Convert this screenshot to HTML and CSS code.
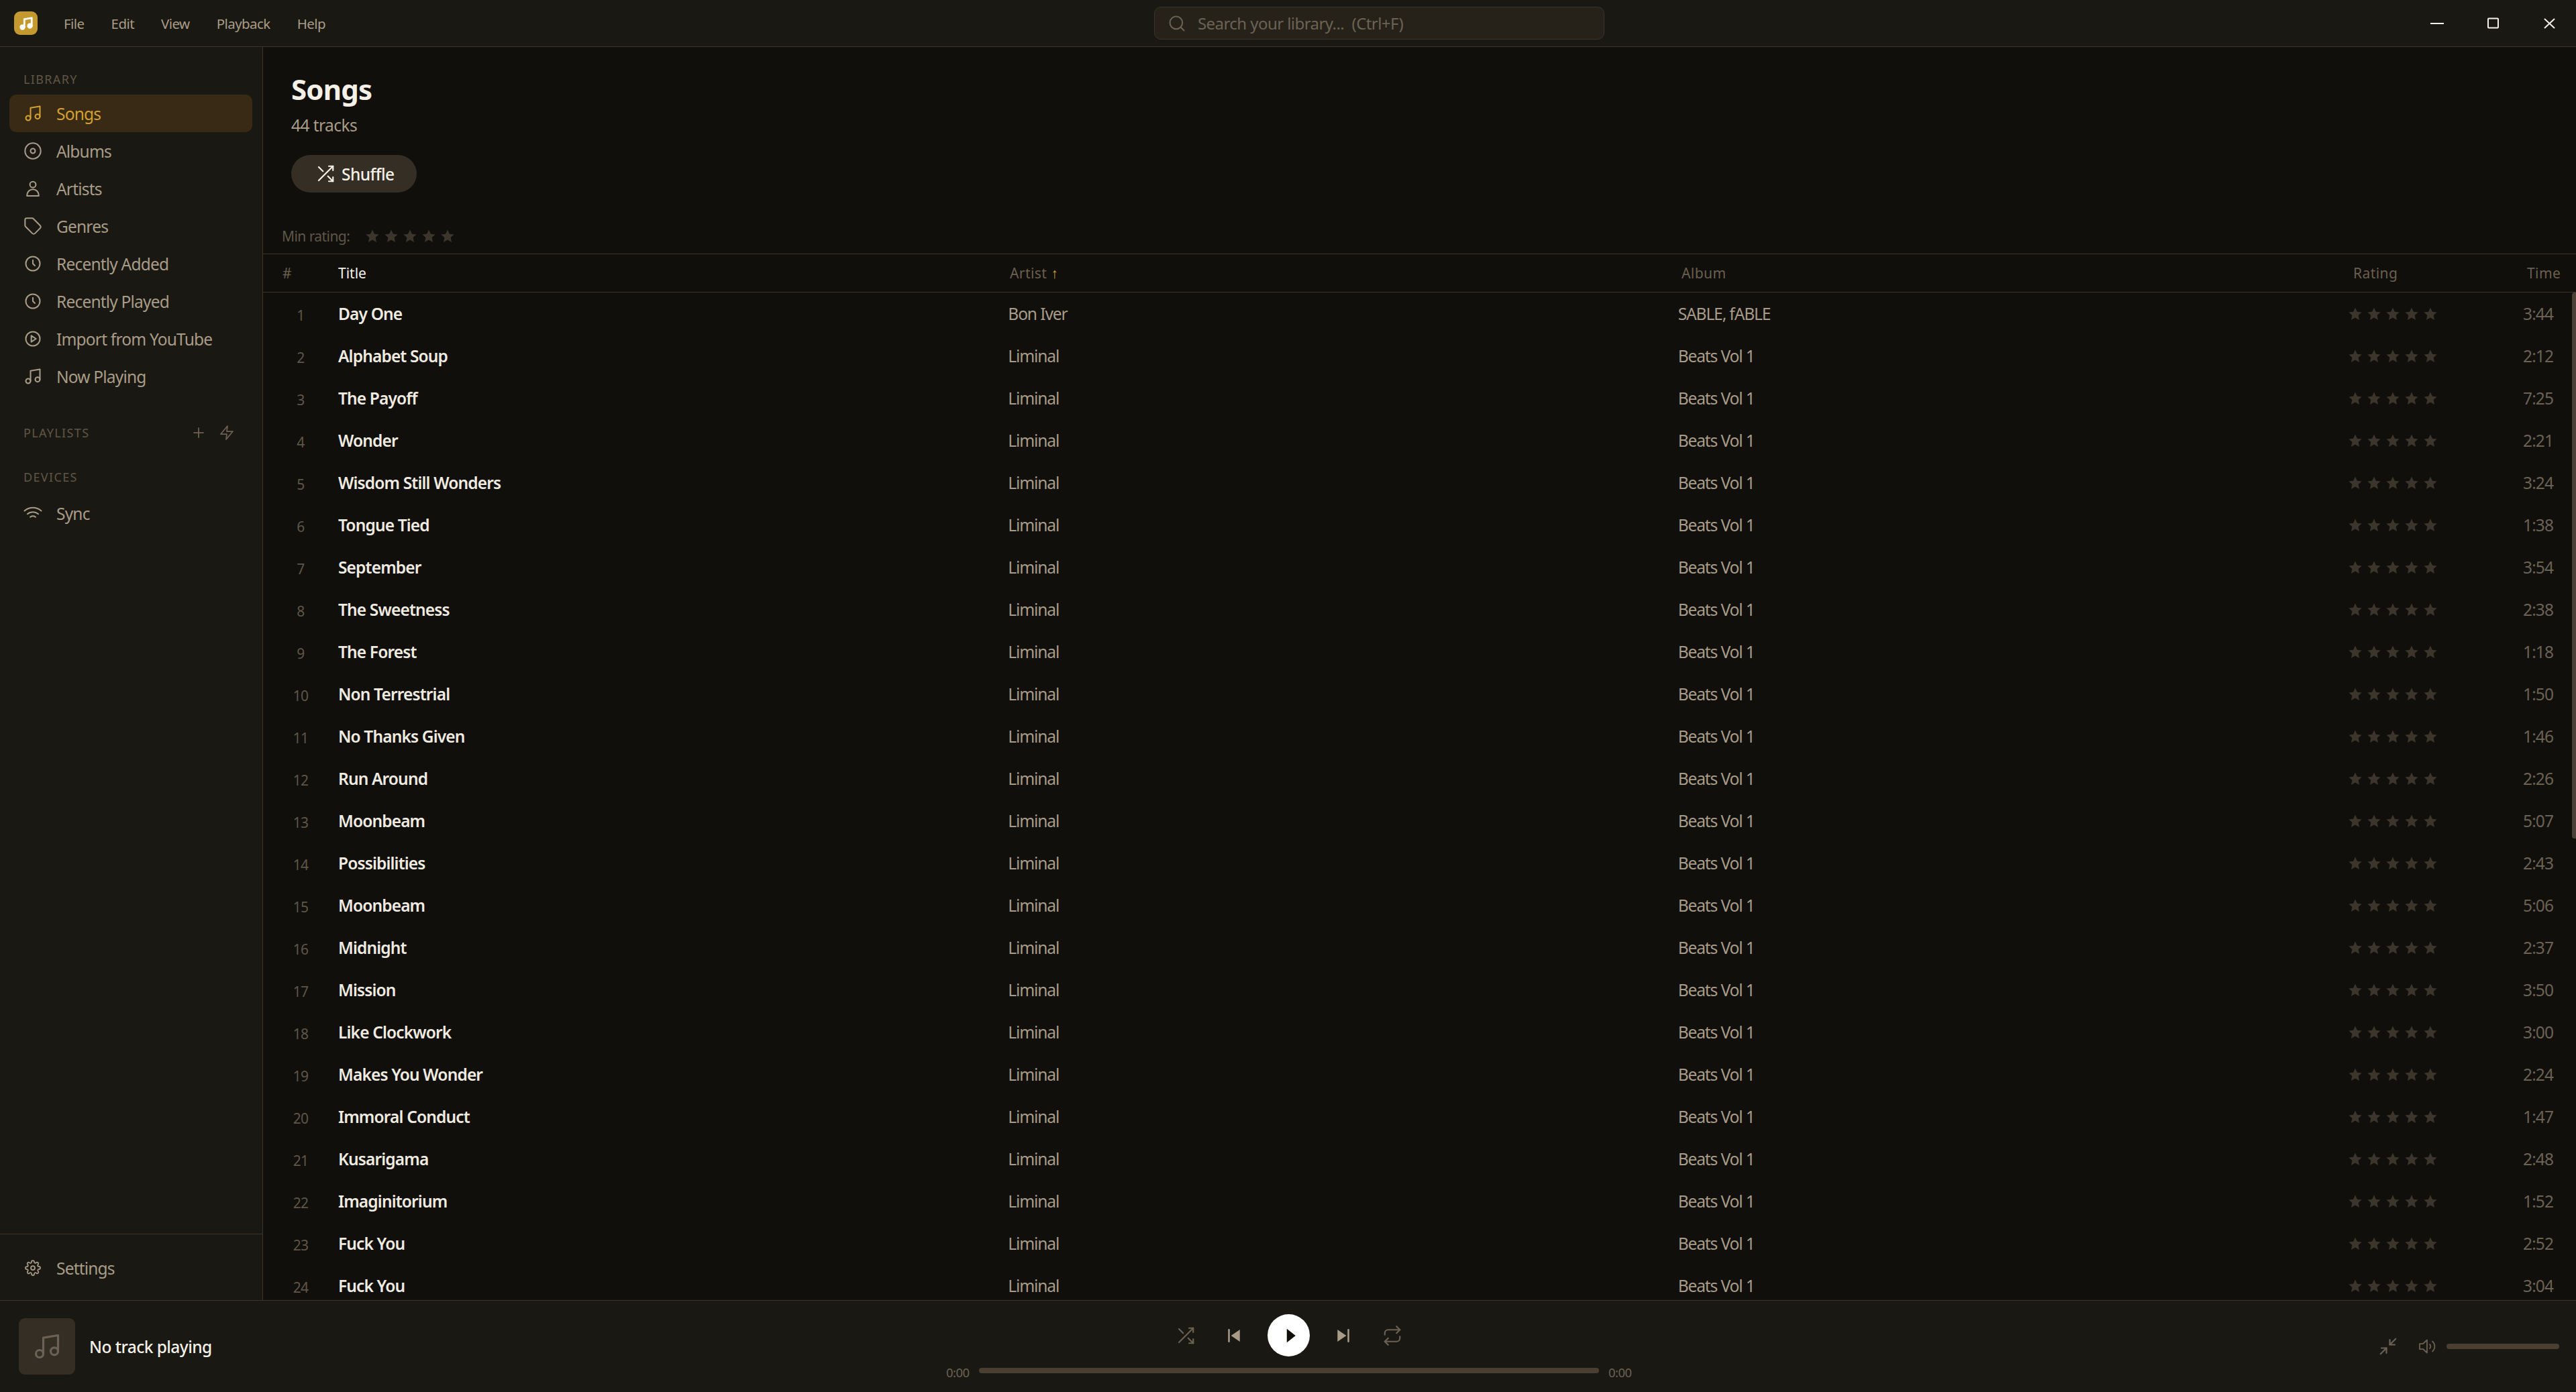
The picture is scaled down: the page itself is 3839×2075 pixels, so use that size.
FILE: index.html
```html
<!DOCTYPE html>
<html lang="en">
<head>
    <meta charset="UTF-8">
    <meta name="viewport" content="width=device-width, initial-scale=1.0">
    <title>Music Library</title>
    <link rel="stylesheet" href="styles.css">
</head>
<body>
    <svg class="sprite" aria-hidden="true">
        <symbol id="i-music" viewBox="0 0 24 24"><path d="M9 18V5l12-2v13"/><circle cx="6" cy="18" r="3"/><circle cx="18" cy="16" r="3"/></symbol>
        <symbol id="i-disc" viewBox="0 0 24 24"><circle cx="12" cy="12" r="10"/><circle cx="12" cy="12" r="3"/></symbol>
        <symbol id="i-user" viewBox="0 0 24 24"><circle cx="12" cy="7" r="3.800"/><path d="M4.500 21.500v-1a7.500 7.500 0 0 1 15 0v1z"/></symbol>
        <symbol id="i-tag" viewBox="0 0 24 24"><path d="M12.600 2.600A2 2 0 0 0 11.200 2H4a2 2 0 0 0-2 2v7.200a2 2 0 0 0 .6 1.400l8.700 8.700a2.400 2.400 0 0 0 3.400 0l6.600-6.600a2.400 2.400 0 0 0 0-3.400z"/></symbol>
        <symbol id="i-clock" viewBox="0 0 24 24"><circle cx="12" cy="12" r="9"/><path d="M12 7.500V12l2.500 2.500"/></symbol>
        <symbol id="i-play-circle" viewBox="0 0 24 24"><circle cx="12" cy="12" r="9"/><path d="M10 8l6 4-6 4z"/></symbol>
        <symbol id="i-wifi" viewBox="0 0 24 24"><path d="M1.300 9a16 16 0 0 1 21.400 0"/><path d="M5 13a11 11 0 0 1 14 0"/><path d="M8.700 16.800a6 6 0 0 1 6.600 0"/></symbol>
        <symbol id="i-gear" viewBox="-2 -2 28 28"><circle cx="12" cy="12" r="3"/><path d="M19.400 15a1.650 1.650 0 0 0 .33 1.820l.06.06a2 2 0 1 1-2.830 2.830l-.06-.06a1.650 1.650 0 0 0-2.820 1.170V21a2 2 0 1 1-4 0v-.09A1.650 1.650 0 0 0 7.200 19.700l-.06.06a2 2 0 1 1-2.830-2.830l.06-.06a1.650 1.650 0 0 0-1.170-2.820H3a2 2 0 1 1 0-4h.09A1.650 1.650 0 0 0 4.300 7.200l-.06-.06a2 2 0 1 1 2.830-2.830l.06.06a1.650 1.650 0 0 0 2.820-1.170V3a2 2 0 1 1 4 0v.09a1.650 1.650 0 0 0 2.820 1.170l.06-.06a2 2 0 1 1 2.830 2.830l-.06.06a1.650 1.650 0 0 0 1.170 2.820H21a2 2 0 1 1 0 4h-.09a1.650 1.650 0 0 0-1.510 1z"/></symbol>
        <symbol id="i-shuffle" viewBox="0 0 24 24"><path d="M16 3h5v5"/><path d="M4 20L21 3"/><path d="M21 16v5h-5"/><path d="M15 15l6 6"/><path d="M4 4l5 5"/></symbol>
        <symbol id="i-star" viewBox="0 0 24 24"><path class="solid" d="M12 1.500l3.200 7 7.300.8-5.400 5 1.500 7.500-6.600-3.800-6.600 3.800 1.500-7.500-5.400-5 7.300-.8z"/></symbol>
    </svg>

    <div class="app">
        <header class="titlebar">
            <div class="titlebar-left">
                <div class="logo">
                    <svg viewBox="0 0 24 24"><path d="M9 18V5l12-2v13"/><circle cx="6" cy="18" r="3"/><circle cx="18" cy="16" r="3"/></svg>
                </div>
                <nav class="menu">
                    <span>File</span>
                    <span>Edit</span>
                    <span>View</span>
                    <span>Playback</span>
                    <span>Help</span>
                </nav>
            </div>
            <div class="search">
                <svg class="icon" viewBox="0 0 24 24"><circle cx="11" cy="11" r="8"/><path d="M21 21l-4.350-4.350"/></svg>
                <span>Search your library...  (Ctrl+F)</span>
            </div>
            <div class="window-controls">
                <svg viewBox="0 0 20 20"><path d="M0 10h20"/></svg>
                <svg viewBox="0 0 20 20"><rect x="2" y="2.500" width="15" height="14" rx="1"/></svg>
                <svg viewBox="0 0 20 20"><path d="M2 3l15 14M17 3L2 17"/></svg>
            </div>
        </header>

        <aside class="sidebar">
            <div class="sidebar-scroll">
                <div class="section-label">LIBRARY</div>
                <a class="nav-item active"><svg class="icon"><use href="#i-music"/></svg>Songs</a>
                <a class="nav-item"><svg class="icon"><use href="#i-disc"/></svg>Albums</a>
                <a class="nav-item"><svg class="icon"><use href="#i-user"/></svg>Artists</a>
                <a class="nav-item"><svg class="icon"><use href="#i-tag"/></svg>Genres</a>
                <a class="nav-item"><svg class="icon"><use href="#i-clock"/></svg>Recently Added</a>
                <a class="nav-item"><svg class="icon"><use href="#i-clock"/></svg>Recently Played</a>
                <a class="nav-item"><svg class="icon"><use href="#i-play-circle"/></svg>Import from YouTube</a>
                <a class="nav-item"><svg class="icon"><use href="#i-music"/></svg>Now Playing</a>

                <div class="section-label playlists">
                    PLAYLISTS
                    <span class="section-actions">
                        <svg class="icon" viewBox="0 0 24 24"><path d="M12 5v14M5 12h14"/></svg>
                        <svg class="icon" viewBox="0 0 24 24"><path d="M13 2L3 14h9l-1 8 10-12h-9z"/></svg>
                    </span>
                </div>

                <div class="section-label devices">DEVICES</div>
                <a class="nav-item"><svg class="icon"><use href="#i-wifi"/></svg>Sync</a>
            </div>
            <div class="sidebar-footer">
                <a class="nav-item"><svg class="icon"><use href="#i-gear"/></svg>Settings</a>
            </div>
        </aside>

        <main class="content">
            <div class="page-head">
                <h1>Songs</h1>
                <p class="track-count">44 tracks</p>
                <button class="shuffle-btn"><svg class="icon"><use href="#i-shuffle"/></svg>Shuffle</button>
            </div>
            <div class="filter-bar">
                <span>Min rating:</span>
                <span class="stars" id="minRating"></span>
            </div>
            <div class="table-head">
                <span class="col-num">#</span>
                <span class="col-title">Title</span>
                <span>Artist <b class="sort-arrow">↑</b></span>
                <span>Album</span>
                <span>Rating</span>
                <span>Time</span>
            </div>
            <div class="table-body">
                <div id="rows"></div>
                <div class="scroll-thumb"></div>
            </div>
        </main>

        <footer class="player">
            <div class="now-playing">
                <div class="cover"><svg><use href="#i-music"/></svg></div>
                <span class="np-title">No track playing</span>
            </div>
            <div class="transport">
                <div class="transport-btns">
                    <svg class="t-icon shuffle"><use href="#i-shuffle"/></svg>
                    <svg class="t-icon skip" viewBox="0 0 24 24"><path class="solid" d="M19 4.800L8.500 12 19 19.200z"/><path d="M6 5v14"/></svg>
                    <button class="play-btn"><svg viewBox="0 0 24 24"><path d="M9 2.500L21 12 9 21.500z"/></svg></button>
                    <svg class="t-icon skip" viewBox="0 0 24 24"><path class="solid" d="M5 4.800L15.500 12 5 19.200z"/><path d="M18 5v14"/></svg>
                    <svg class="t-icon repeat" viewBox="0 0 24 24"><path d="M17 1l4 4-4 4"/><path d="M3 11V9a4 4 0 0 1 4-4h14"/><path d="M7 23l-4-4 4-4"/><path d="M21 13v2a4 4 0 0 1-4 4H3"/></svg>
                </div>
                <div class="progress-row">
                    <span class="time-label">0:00</span>
                    <div class="progress"></div>
                    <span class="time-label">0:00</span>
                </div>
            </div>
            <div class="player-right">
                <svg class="r-icon" viewBox="0 0 24 24"><path d="M4 14h6v6"/><path d="M20 10h-6V4"/><path d="M14 10l7-7"/><path d="M3 21l7-7"/></svg>
                <svg class="vol-icon" viewBox="0 0 26 22"><path d="M1 7h5l6-5.500v19L6 15H1z"/><path d="M16 8a4 4 0 0 1 0 6"/><path d="M20 3.500a10 10 0 0 1 0 15"/></svg>
                <div class="volume"></div>
            </div>
        </footer>
    </div>

    <script>
        const tracks = [
            ['Day One', '3:44'], ['Alphabet Soup', '2:12'], ['The Payoff', '7:25'], ['Wonder', '2:21'],
            ['Wisdom Still Wonders', '3:24'], ['Tongue Tied', '1:38'], ['September', '3:54'], ['The Sweetness', '2:38'],
            ['The Forest', '1:18'], ['Non Terrestrial', '1:50'], ['No Thanks Given', '1:46'], ['Run Around', '2:26'],
            ['Moonbeam', '5:07'], ['Possibilities', '2:43'], ['Moonbeam', '5:06'], ['Midnight', '2:37'],
            ['Mission', '3:50'], ['Like Clockwork', '3:00'], ['Makes You Wonder', '2:24'], ['Immoral Conduct', '1:47'],
            ['Kusarigama', '2:48'], ['Imaginitorium', '1:52'], ['Fuck You', '2:52'], ['Fuck You', '3:04']
        ];

        const starSvg = '<svg class="star"><use href="#i-star"/></svg>';
        const fiveStars = starSvg.repeat(5);

        document.getElementById('minRating').innerHTML = fiveStars;

        document.getElementById('rows').innerHTML = tracks.map((track, i) => {
            const artist = i === 0 ? 'Bon Iver' : 'Liminal';
            const album = i === 0 ? 'SABLE, fABLE' : 'Beats Vol 1';
            return `<div class="row">
                <span class="col-num">${i + 1}</span>
                <span class="col-title">${track[0]}</span>
                <span>${artist}</span>
                <span>${album}</span>
                <span class="stars">${fiveStars}</span>
                <span class="col-time">${track[1]}</span>
            </div>`;
        }).join('');
    </script>
</body>
</html>
```
FILE: styles.css
```css
* {
    margin: 0;
    padding: 0;
    box-sizing: border-box;
    font-family: 'Noto Sans', 'Open Sans', sans-serif;
}

body {
    height: 100vh;
    overflow: hidden;
    background: #100f0c;
    color: #a89c88;
    letter-spacing: -0.035em;
}

.sprite {
    display: none;
}

svg {
    fill: none;
    stroke: currentColor;
    stroke-width: 1.75;
    stroke-linecap: round;
    stroke-linejoin: round;
    flex-shrink: 0;
}

.solid {
    fill: currentColor;
    stroke: none;
}

.icon {
    width: 28px;
    height: 28px;
}

.app {
    height: 100vh;
    display: grid;
    grid-template-columns: 392px 1fr;
    grid-template-rows: 70px minmax(0, 1fr) 137px;
}

/* title bar */
.titlebar {
    grid-column: 1 / 3;
    display: grid;
    grid-template-columns: 1720px 671px 1fr;
    align-items: center;
    background: #1a1812;
    border-bottom: 1px solid #3a342a;
}

.titlebar-left {
    display: flex;
    align-items: center;
    padding-left: 21px;
}

.logo {
    width: 35px;
    height: 35px;
    border-radius: 9px;
    background: #c49a2e;
    color: #fff;
    display: flex;
    align-items: center;
    justify-content: center;
}

.logo svg {
    width: 22px;
    height: 22px;
    stroke-width: 3;
}

.logo circle {
    fill: #fff;
}

.menu {
    display: flex;
    gap: 40px;
    margin-left: 39px;
    font-size: 20.5px;
    color: #a89c88;
}

.search {
    height: 49px;
    display: flex;
    align-items: center;
    gap: 17px;
    padding-left: 19px;
    background: #26221a;
    border: 1px solid #3a342a;
    border-radius: 10px;
    color: #6b6254;
    font-size: 24px;
    white-space: pre;
}

.window-controls {
    display: flex;
    justify-content: flex-end;
    align-items: center;
    gap: 64px;
    padding-right: 29px;
    color: #f5f0e8;
}

.window-controls svg {
    width: 20px;
    height: 20px;
    stroke-width: 2;
    stroke-linecap: butt;
}

/* sidebar */
.sidebar {
    display: flex;
    flex-direction: column;
    background: #1a1812;
    border-right: 1px solid #3a342a;
    min-height: 0;
}

.sidebar-scroll {
    flex: 1;
    padding: 35px 15px 0 14px;
}

.section-label {
    padding-left: 21px;
    font-size: 18px;
    line-height: 26px;
    letter-spacing: 0.075em;
    color: #5f5647;
}

.section-label.playlists {
    display: flex;
    justify-content: space-between;
    align-items: center;
    margin-top: 43px;
    padding-right: 26px;
}

.section-actions {
    display: flex;
    gap: 18px;
    color: #6b6254;
}

.section-actions .icon {
    width: 24px;
    height: 24px;
}

.section-label.devices {
    margin-top: 40px;
    margin-bottom: 13px;
}

.nav-item {
    height: 56px;
    display: flex;
    align-items: center;
    gap: 21px;
    padding-left: 21px;
    border-radius: 10px;
    font-size: 24.5px;
    letter-spacing: -0.033em;
    color: #a89c88;
}

.nav-item.active {
    margin-top: 10px;
    background: #382a14;
    color: #d4a030;
}

.sidebar-footer {
    height: 99px;
    padding: 22px 15px 0 14px;
    border-top: 1px solid #3a342a;
}

/* main */
.content {
    display: flex;
    flex-direction: column;
    min-height: 0;
}

.page-head {
    height: 250px;
    padding: 34px 0 0 42px;
}

h1 {
    font-size: 42px;
    line-height: 58px;
    font-weight: 700;
    letter-spacing: -0.02em;
    color: #f5f0e8;
}

.track-count {
    margin-top: 7px;
    font-size: 24.5px;
    line-height: 36px;
}

.shuffle-btn {
    display: flex;
    align-items: center;
    gap: 9px;
    height: 56px;
    width: 187px;
    margin-top: 26px;
    padding-left: 36px;
    border: none;
    border-radius: 28px;
    background: #342e25;
    color: #f5f0e8;
    font-size: 24.5px;
    font-weight: 500;
    letter-spacing: inherit;
}

.shuffle-btn .icon {
    width: 30px;
    height: 30px;
}

.filter-bar {
    height: 58px;
    display: flex;
    align-items: center;
    gap: 23px;
    padding: 6px 0 0 28px;
    font-size: 21px;
    color: #5f5647;
}

.stars {
    display: flex;
    gap: 6px;
}

.star {
    width: 22px;
    height: 22px;
    color: #3c352b;
}

.table-head {
    height: 58px;
    display: grid;
    grid-template-columns: 56px 1fr 1fr 1fr 231px 46px;
    column-gap: 28px;
    align-items: center;
    padding: 0 27px 0 28px;
    border-top: 1px solid #3a342a;
    border-bottom: 1px solid #3a342a;
    font-size: 21px;
    letter-spacing: 0.02em;
    color: #6b5f4f;
}

.table-head .col-title {
    color: #f5f0e8;
    letter-spacing: 0;
}

.table-head .col-num {
    padding-left: 1px;
}

.sort-arrow {
    color: #d4a030;
    font-weight: 400;
}

.table-body {
    position: relative;
    flex: 1;
    min-height: 0;
    overflow: hidden;
}

.scroll-thumb {
    position: absolute;
    top: 0;
    right: 0;
    width: 6px;
    height: 814px;
    background: #4a4234;
    border-radius: 4px 0 0 4px;
}

.row {
    height: 63px;
    display: grid;
    grid-template-columns: 56px 1fr 1fr 1fr 233px 43px;
    column-gap: 28px;
    align-items: center;
    padding: 0 36px 0 28px;
    font-size: 24.5px;
    letter-spacing: -0.045em;
}

.row .col-num {
    text-align: center;
    font-size: 21px;
    letter-spacing: -0.035em;
    color: #5f5647;
    padding-top: 4px;
}

.row .col-title {
    font-weight: 600;
    letter-spacing: -0.035em;
    color: #f0ebe0;
}

.col-time {
    text-align: right;
    color: #6b6254;
    letter-spacing: -0.035em;
}

/* player bar */
.player {
    grid-column: 1 / 3;
    display: grid;
    grid-template-columns: 1410px 1022px 1fr;
    background: #1a1812;
    border-top: 1px solid #3a342a;
}

.now-playing {
    display: flex;
    align-items: center;
    gap: 21px;
    padding-left: 28px;
}

.cover {
    width: 84px;
    height: 84px;
    border-radius: 9px;
    background: #342e25;
    color: #6b6254;
    display: flex;
    align-items: center;
    justify-content: center;
}

.cover svg {
    width: 44px;
    height: 44px;
}

.np-title {
    font-size: 24.5px;
    font-weight: 500;
    color: #f5f0e8;
}

.transport {
    display: flex;
    flex-direction: column;
    align-items: center;
    padding-top: 20px;
}

.transport-btns {
    display: flex;
    align-items: center;
    gap: 35px;
}

.t-icon {
    width: 30px;
    height: 30px;
    color: #6b6254;
}

.t-icon.shuffle {
    margin-right: 7px;
}

.t-icon.repeat {
    margin-left: 8px;
}

.t-icon.skip {
    color: #a89c88;
    stroke-width: 2;
}

.play-btn {
    width: 63px;
    height: 63px;
    border: none;
    border-radius: 50%;
    background: #fff;
    display: flex;
    align-items: center;
    justify-content: center;
}

.play-btn svg {
    width: 26px;
    height: 26px;
    fill: #100f0c;
    stroke: none;
}

.progress-row {
    width: 100%;
    display: flex;
    align-items: center;
    gap: 14px;
    margin-top: 5px;
}

.time-label {
    font-size: 18.500px;
    color: #6b6254;
    width: 35px;
    padding-top: 6px;
}

.progress {
    flex: 1;
    height: 8px;
    border-radius: 4px;
    background: #4a3f30;
}

.player-right {
    display: flex;
    align-items: center;
    justify-content: flex-end;
    gap: 31px;
    padding-right: 25px;
    color: #6b6254;
}

.r-icon {
    width: 30px;
    height: 30px;
}

.vol-icon {
    width: 26px;
    height: 22px;
}

.volume {
    width: 168px;
    height: 8px;
    margin-left: -16px;
    border-radius: 4px;
    background: #4a3f30;
}
```
